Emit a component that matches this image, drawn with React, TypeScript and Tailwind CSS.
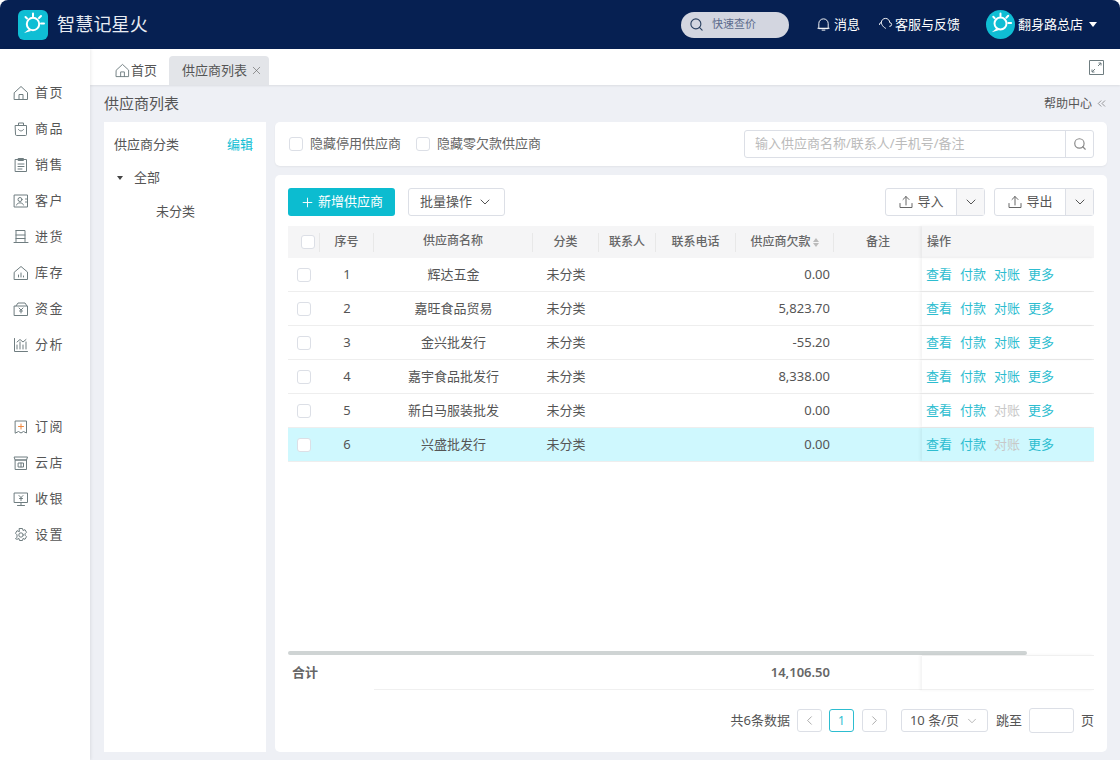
import { ChevronDown, ChevronLeft, ChevronRight, ChevronsLeft, Plus, Search, X } from "lucide-react";
import type { ReactNode } from "react";

const font = { fontFamily: '"Noto Sans", "Noto Sans CJK SC", sans-serif' };

function Glyph({ children, size = 16, stroke = "#6f7d80" }: { children: ReactNode; size?: number; stroke?: string }) {
  return (
    <svg width={size} height={size} viewBox="0 0 16 16" fill="none" stroke={stroke} strokeWidth="1" strokeLinejoin="round" strokeLinecap="round" className="shrink-0">
      {children}
    </svg>
  );
}

function Logo({ size }: { size: number }) {
  return (
    <svg width={size} height={size} viewBox="0 0 30 30" className="shrink-0">
      <circle cx="15" cy="14" r="6.2" fill="none" stroke="#fff" strokeWidth="2" />
      <path d="M15 3.5v3M23 6l-2 2M26 13.5h-3M7.5 7l1.5 1.5" stroke="#fff" strokeWidth="2" strokeLinecap="round" />
      <path d="M6 23l5-4 2 2z" fill="#fff" />
    </svg>
  );
}

const navIcons: Record<string, ReactNode> = {
  首页: <path d="M1.5 7.5 8 1.5l6.5 6v7h-13zM6 14.5v-5h4v5" />,
  商品: <><path d="M2.5 4.5h11v9a1 1 0 0 1-1 1h-9a1 1 0 0 1-1-1z" /><path d="M5.5 4.5V2h5v2.5M5.5 8.5c1 2 4 2 5 0" /></>,
  销售: <><path d="M2.5 2.5h11v12h-11z" /><path d="M5.5 1.5h5v2h-5zM5 7h6M5 9.5h6M5 12h4" /></>,
  客户: <><path d="M1.5 2h13v12h-13z" /><circle cx="7" cy="6.5" r="2" /><path d="M3.5 12c.5-3 6.5-3 7 0M12.5 6h1M12.5 9h1" /></>,
  进货: <path d="M3 1.5v11M3 1.5h9v11M3 6h9M3 9.5h9M1 13.5h14" />,
  库存: <path d="M1.5 7 8 1.5 14.5 7v7.5h-13zM5.5 12v-2M8 12V8M10.5 12v-1" />,
  资金: <><path d="M1.5 5h13v9.5h-13zM3 5l2-3h7l2 3" /><path d="M6 7l2 2 2-2M8 9v3M6.5 10h3" /></>,
  分析: <path d="M1.5 1.5v13h13M4 12V8M7 12V5M10 12V8M13 12V5M4 5l3-2.5 3 2.5 3-2.5" />,
  订阅: <><path d="M2.5 2h11v12l-3-1.5-2.5 1.500-2.500-1.500-3 1.500z" /><path d="M8 5v5M5.5 7.5h5" stroke="#f0883e" /></>,
  云店: <><path d="M2.5 5h11v9.5h-11zM1.5 2h13l-1 3h-11z" /><path d="M5.5 8h5v4h-5zM8 8v4" /></>,
  收银: <><path d="M1.5 2h13v9.5h-13zM8 11.5v3M4.5 14.5h7" /><path d="M6 4.5l2 2 2-2M8 6.5v3M6.5 7.5h3" /></>,
  设置: <><path d="M6.5 1.5h3l.5 2 2-.8 1.5 2.6-1.5 1.5v1.400l1.500 1.500-1.500 2.600-2-.8-.5 2h-3l-.5-2-2 .8L2.500 11.700 4 10.200V7.800L2.500 6.300 4 3.700l2 .8z" /><circle cx="8" cy="8" r="2.2" /></>,
};

function NavItem({ label }: { label: string }) {
  return (
    <div className="flex h-9 items-center pl-[13px] text-[13px] tracking-[1.5px] text-[#555]">
      <Glyph>{navIcons[label]}</Glyph>
      <span className="ml-[6px]">{label}</span>
    </div>
  );
}

function Checkbox() {
  return <span className="block h-[14px] w-[14px] shrink-0 rounded-[3px] border border-[#dcdfe6] bg-white" />;
}

const suppliers = [
  { id: 1, name: "辉达五金", debt: "0.00", reconcile: true },
  { id: 2, name: "嘉旺食品贸易", debt: "5,823.70", reconcile: true },
  { id: 3, name: "金兴批发行", debt: "-55.20", reconcile: true },
  { id: 4, name: "嘉宇食品批发行", debt: "8,338.00", reconcile: true },
  { id: 5, name: "新白马服装批发", debt: "0.00", reconcile: false },
  { id: 6, name: "兴盛批发行", debt: "0.00", reconcile: false },
];

const gridCols = "grid grid-cols-[32px_54px_159px_66px_57px_80px_98px_88px_172px]";

function HeadCell({ children, className = "", divider = true }: { children?: ReactNode; className?: string; divider?: boolean }) {
  return (
    <div className={"flex h-full items-center " + className}>
      <span className="flex flex-1 items-center justify-center">{children}</span>
      {divider && <span className="h-[19px] w-px bg-[#e8e8e8]" />}
    </div>
  );
}

function ImportButton({ label }: { label: string }) {
  return (
    <div className="flex h-7 items-stretch rounded-[3px] border border-[#dcdfe6] text-[13px] text-[#555]">
      <div className="flex w-[70px] items-center justify-center gap-[3px]">
        <Glyph stroke="#666"><path d="M2 9.5v4h12v-4M8 11V2.5M5 5.5l3-3 3 3" /></Glyph>
        {label}
      </div>
      <div className="flex w-7 items-center justify-center border-l border-[#dcdfe6] bg-[#f7f7f8]">
        <ChevronDown size={16} strokeWidth={1.5} color="#555" />
      </div>
    </div>
  );
}

export default function App() {
  return (
    <div className="flex h-[760px] w-[1120px] flex-col overflow-hidden bg-white" style={font}>
      <header className="flex h-[49px] shrink-0 items-center rounded-t-lg bg-[#062052] pl-[18px] pr-[23px] text-white">
        <div className="h-[30px] w-[30px] rounded-[6px] bg-[#0fbed4]"><Logo size={30} /></div>
        <span className="ml-[9px] text-[18px] tracking-[0.2px] text-[#e8ecf2]">智慧记星火</span>
        <div className="ml-auto flex h-[26px] w-[108px] items-center rounded-full bg-[#d3d6e0] pl-2 text-[11px] text-[#5c6b8c]">
          <Search size={15} color="#2a4060" strokeWidth={1.8} />
          <span className="ml-[8px]">快速查价</span>
        </div>
        <div className="ml-[27px] flex items-center gap-[3px] text-[13px]">
          <Glyph stroke="#fff" size={15}><path d="M3 12V7a5 5 0 0 1 10 0v5zM2 12h12M6.5 14h3" /></Glyph>
          消息
        </div>
        <div className="ml-[18px] flex items-center gap-[2px] text-[13px]">
          <Glyph stroke="#fff" size={15}><path d="M1.5 8a2 2 0 0 1 2-2 4.5 4.5 0 0 1 9 0 2 2 0 0 1 0 4M3.5 6c.5 2 1 4 4.5 6" /></Glyph>
          客服与反馈
        </div>
        <div className="ml-[26px] h-[29px] w-[29px] rounded-full bg-[#0fbed4]"><Logo size={29} /></div>
        <span className="ml-[3px] text-[13px]">翻身路总店</span>
        <span className="ml-[6px] h-0 w-0 border-x-[4.5px] border-t-[5px] border-x-transparent border-t-white" />
      </header>

      <div className="flex min-h-0 flex-1">
        <aside className="z-10 w-[90px] shrink-0 bg-white pt-[26px] shadow-[1px_0_3px_rgba(0,0,0,0.08)]">
          {["首页", "商品", "销售", "客户", "进货", "库存", "资金", "分析"].map((l) => <NavItem key={l} label={l} />)}
          <div className="h-[46px]" />
          {["订阅", "云店", "收银", "设置"].map((l) => <NavItem key={l} label={l} />)}
        </aside>

        <main className="flex min-w-0 flex-1 flex-col bg-[#eef0f5]">
          <div className="flex h-9 shrink-0 items-end bg-white pl-[25px] pr-[16px] text-[13px] text-[#555] shadow-[0_1px_2px_rgba(0,0,0,0.08)]">
            <div className="flex h-[29px] items-center gap-[1px]">
              <Glyph size={15}><path d="M1.5 7.5 8 1.5l6.5 6v7h-13zM6 14.5v-5h4v5" /></Glyph>
              首页
            </div>
            <div className="ml-[12px] flex h-[29px] w-[100px] items-center rounded-t-[4px] bg-[#e3e5e9] pl-[13px]">
              供应商列表
              <X size={13} strokeWidth={1.2} color="#666" className="ml-[3px]" />
            </div>
            <div className="ml-auto self-center">
              <svg width="15" height="15" viewBox="0 0 15 15" fill="none" stroke="#6f7d80" strokeWidth="1"><path d="M.5.5h14v14H.5zM9 6l3-3M9.5 3H12v2.5M6 9l-3 3M3 9.5V12h2.5" /></svg>
            </div>
          </div>

          <div className="flex h-[37px] shrink-0 items-center pl-[14px] pr-[12px] text-[#555]">
            <span className="text-[15px]">供应商列表</span>
            <span className="ml-auto flex items-center gap-[3px] text-[12px]">
              帮助中心 <ChevronsLeft size={13} strokeWidth={1.2} color="#666" />
            </span>
          </div>

          <div className="flex min-h-0 flex-1 gap-[9px] pb-2 pl-[14px] pr-[13px]">
            <section className="w-[162px] shrink-0 bg-white pt-[13px] text-[13px] text-[#555]">
              <div className="flex h-5 items-center justify-between pl-[10px] pr-[13px]">
                <span>供应商分类</span>
                <span className="text-[#0fbed4]">编辑</span>
              </div>
              <div className="mt-[13px] flex h-5 items-center pl-[13px]">
                <span className="h-0 w-0 border-x-[3.5px] border-t-[4px] border-x-transparent border-t-[#444]" />
                <span className="ml-[11px]">全部</span>
              </div>
              <div className="mt-[14px] h-5 pl-[52px]">未分类</div>
            </section>

            <div className="flex min-w-0 flex-1 flex-col gap-[9px]">
              <section className="flex h-11 shrink-0 items-center rounded-[5px] bg-white pl-[14px] pr-[13px] text-[13px] text-[#666] shadow-[0_1px_2px_rgba(0,0,0,0.05)]">
                <Checkbox />
                <span className="ml-[7px]">隐藏停用供应商</span>
                <span className="ml-[15px]"><Checkbox /></span>
                <span className="ml-[7px]">隐藏零欠款供应商</span>
                <div className="ml-auto flex h-[28px] w-[350px] rounded-[3px] border border-[#dcdfe6]">
                  <div className="flex flex-1 items-center pl-[10px] text-[#bbb]">输入供应商名称/联系人/手机号/备注</div>
                  <div className="flex w-[28px] items-center justify-center border-l border-[#dcdfe6]">
                    <Search size={14} color="#888" />
                  </div>
                </div>
              </section>

              <section className="flex min-h-0 flex-1 flex-col rounded-[5px] bg-white px-[13px] pt-[13px] text-[13px] text-[#555]">
                <div className="flex h-7 shrink-0 items-center">
                  <button className="flex h-7 w-[107px] items-center justify-center gap-[3px] rounded-[3px] bg-[#0cbcd0] text-white">
                    <Plus size={15} strokeWidth={1.5} />
                    新增供应商
                  </button>
                  <button className="ml-[13px] flex h-7 w-[97px] items-center justify-center gap-[5px] rounded-[3px] border border-[#dcdfe6]">
                    批量操作
                    <ChevronDown size={16} strokeWidth={1.5} />
                  </button>
                  <div className="ml-auto"><ImportButton label="导入" /></div>
                  <div className="ml-[9px]"><ImportButton label="导出" /></div>
                </div>

                <div className={gridCols + " mt-[10px] h-8 shrink-0 items-center bg-[#f5f5f6] text-[12px] font-medium text-[#666]"}>
                  <HeadCell className="pl-[9px]"><Checkbox /></HeadCell>
                  <HeadCell>序号</HeadCell>
                  <HeadCell><span className="pb-[3px]">供应商名称</span></HeadCell>
                  <HeadCell>分类</HeadCell>
                  <HeadCell>联系人</HeadCell>
                  <HeadCell>联系电话</HeadCell>
                  <HeadCell>
                    供应商欠款
                    <span className="ml-[2px] flex flex-col gap-[1px]">
                      <span className="h-0 w-0 border-x-[3.5px] border-b-[4px] border-x-transparent border-b-[#bbb]" />
                      <span className="h-0 w-0 border-x-[3.5px] border-t-[4px] border-x-transparent border-t-[#bbb]" />
                    </span>
                  </HeadCell>
                  <HeadCell divider={false}>备注</HeadCell>
                  <div className="flex h-full items-center pl-[5px] shadow-[-2px_0_3px_rgba(0,0,0,0.05)]">操作</div>
                </div>

                {suppliers.map((s) => (
                  <div
                    key={s.id}
                    className={gridCols + " h-[34px] shrink-0 items-center border-b border-[#eeeeee] " + (s.id === 6 ? "bg-[#cff8fe]" : "")}
                  >
                    <div className="pl-[9px]"><Checkbox /></div>
                    <div className="text-center">{s.id}</div>
                    <div className="text-center">{s.name}</div>
                    <div className="text-center">未分类</div>
                    <div />
                    <div />
                    <div className="pr-[4px] text-right">{s.debt}</div>
                    <div />
                    <div className="flex h-full items-center gap-[8px] pl-[4px] text-[#2dbdd0] shadow-[-2px_0_3px_rgba(0,0,0,0.05)]">
                      <span>查看</span>
                      <span>付款</span>
                      <span className={s.reconcile ? "" : "text-[#c8c8c8]"}>对账</span>
                      <span>更多</span>
                    </div>
                  </div>
                ))}

                <div className="min-h-0 flex-1" />
                <div className="h-[4px] w-[739px] shrink-0 rounded-full bg-[#cfd4d4]" />
                <div className={gridCols + " h-[34px] shrink-0 items-center font-semibold text-[#666]"}>
                  <div className="col-span-2 self-stretch pl-[4px] leading-[34px]">合计</div>
                  <div className="col-span-4 self-stretch border-b border-[#f0f0f0]" />
                  <div className="self-stretch border-b border-[#f0f0f0] pr-[4px] text-right leading-[34px]">14,106.50</div>
                  <div className="self-stretch border-b border-[#f0f0f0]" />
                  <div className="self-stretch border-b border-t border-[#f0f0f0] shadow-[-2px_0_3px_rgba(0,0,0,0.05)]" />
                </div>

                <div className="flex h-[63px] shrink-0 items-center justify-end">
                  <span className="mr-[7px]">共6条数据</span>
                  <span className="flex h-[23px] w-[25px] items-center justify-center rounded-[3px] border border-[#dcdfe6]"><ChevronLeft size={15} color="#999" strokeWidth={1.3} /></span>
                  <span className="ml-[7px] flex h-[23px] w-[25px] items-center justify-center rounded-[3px] border border-[#2dbdd0] text-[12px] text-[#2dbdd0]">1</span>
                  <span className="ml-[8px] flex h-[23px] w-[25px] items-center justify-center rounded-[3px] border border-[#dcdfe6]"><ChevronRight size={15} color="#999" strokeWidth={1.3} /></span>
                  <span className="ml-[14px] flex h-[23px] w-[87px] items-center justify-center gap-[6px] rounded-[3px] border border-[#dcdfe6]">10 条/页 <ChevronDown size={14} color="#999" strokeWidth={1.2} /></span>
                  <span className="ml-[8px]">跳至</span>
                  <span className="ml-[7px] h-[25px] w-[45px] rounded-[3px] border border-[#dcdfe6]" />
                  <span className="ml-[7px]">页</span>
                </div>
              </section>
            </div>
          </div>
        </main>
      </div>
    </div>
  );
}
